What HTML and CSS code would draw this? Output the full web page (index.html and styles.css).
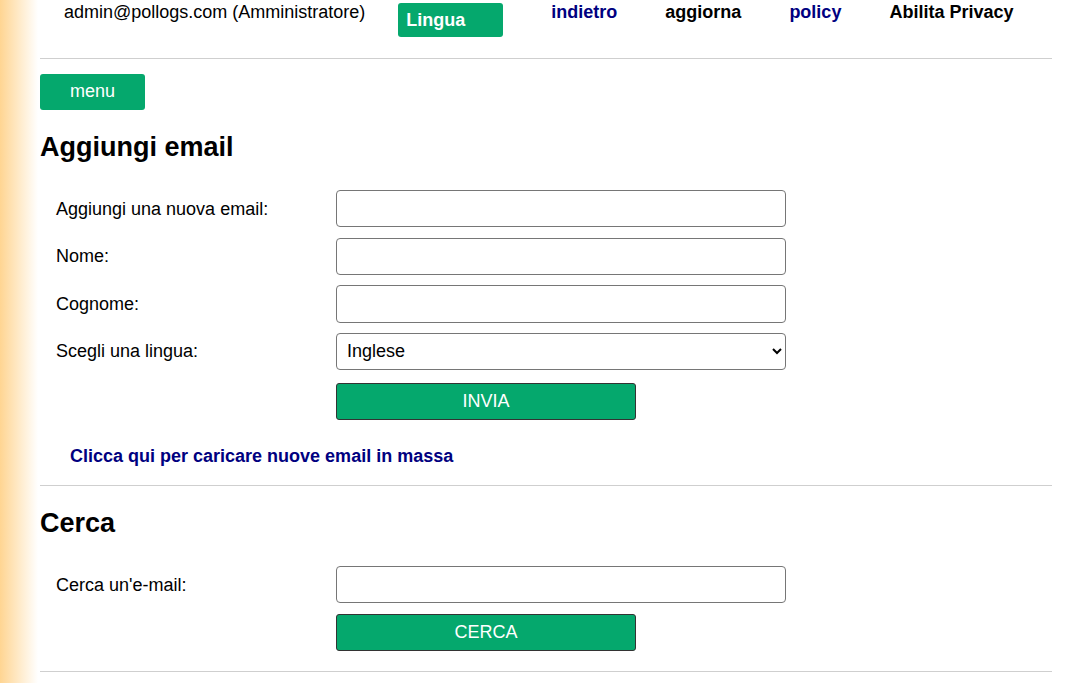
FILE: index.html
```html
<!DOCTYPE html>
<html lang="it">
<head>
<meta charset="utf-8">
<title>Aggiungi email</title>
<link rel="stylesheet" href="styles.css">
</head>
<body>
<div class="page">
  <header class="topbar">
    <span class="user">admin@pollogs.com (Amministratore)</span>
    <button class="lang-btn" type="button">Lingua</button>
    <a class="nav-link navy" href="#">indietro</a>
    <a class="nav-link" href="#">aggiorna</a>
    <a class="nav-link navy" href="#">policy</a>
    <a class="nav-link" href="#">Abilita Privacy</a>
  </header>
  <hr class="rule">
  <button class="menu-btn" type="button">menu</button>

  <h2 class="title title-add">Aggiungi email</h2>
  <form class="form-grid">
    <label class="label" for="em">Aggiungi una nuova email:</label>
    <input class="field" id="em" type="text">
    <label class="label" for="nm">Nome:</label>
    <input class="field" id="nm" type="text">
    <label class="label" for="cg">Cognome:</label>
    <input class="field" id="cg" type="text">
    <label class="label" for="lg">Scegli una lingua:</label>
    <select class="field select" id="lg"><option>Inglese</option></select>
    <span></span>
    <button class="submit" type="button">INVIA</button>
  </form>
  <a class="bulk-link" href="#">Clicca qui per caricare nuove email in massa</a>
  <hr class="rule rule-mid">

  <h2 class="title title-search">Cerca</h2>
  <form class="form-grid search-grid">
    <label class="label" for="se">Cerca un'e-mail:</label>
    <input class="field" id="se" type="text">
    <span></span>
    <button class="submit" type="button">CERCA</button>
  </form>
  <hr class="rule rule-end">
</div>
</body>
</html>
```

FILE: styles.css
```css
html, body {
  margin: 0;
  padding: 0;
}
body {
  background: linear-gradient(to right, #ffd592 0, #fff 38px) #fff;
  font-family: "Liberation Sans", Arial, sans-serif;
  font-size: 18px;
  color: #000;
  min-height: 683px;
}
.page {
  padding: 0 39px 0 40px;
}
.topbar {
  display: flex;
  align-items: flex-start;
  height: 58px;
  padding-left: 24px;
  box-sizing: border-box;
  padding-top: 2px;
  white-space: nowrap;
}
.topbar > * {
  flex-shrink: 0;
}
.user {
  line-height: 21px;
  margin-right: 33px;
}
.lang-btn {
  width: 105px;
  height: 34px;
  margin-top: 1px;
  background: #05a86d;
  color: #fff;
  border: none;
  border-radius: 3px;
  font: bold 18px "Liberation Sans", Arial, sans-serif;
  text-align: left;
  padding: 7px 8px 0;
  display: flex;
  align-items: flex-start;
  margin-right: 48px;
}
.nav-link {
  font-weight: bold;
  color: #000;
  text-decoration: none;
  line-height: 21px;
  margin-right: 48px;
}
.nav-link.navy {
  color: #000080;
}
.rule {
  border: none;
  border-top: 1px solid #cfcfcf;
  margin: 0;
  height: 0;
}
.menu-btn {
  display: block;
  margin-top: 15px;
  width: 105px;
  height: 36px;
  background: #05a86d;
  color: #fff;
  border: none;
  border-radius: 3px;
  font: 18px "Liberation Sans", Arial, sans-serif;
  padding: 0 0 2px;
}
.title {
  font-size: 27px;
  font-weight: bold;
  line-height: 32px;
  margin: 0;
}
.title-add {
  margin-top: 21px;
}
.form-grid {
  display: grid;
  grid-template-columns: 280px 450px;
  column-gap: 0;
  row-gap: 10.2px;
  align-items: center;
  margin: 27px 0 0 16px;
}
.label {
  line-height: 21px;
  padding-top: 1px;
}
.field {
  box-sizing: border-box;
  width: 450px;
  height: 37.4px;
  border: 1px solid #767676;
  border-radius: 4px;
  background: #fff;
  font: 18px "Liberation Sans", Arial, sans-serif;
  padding: 0 10px;
  margin: 0;
}
.select {
  padding: 0 6px 0 6px;
  color: #000;
}
.submit {
  box-sizing: border-box;
  width: 300px;
  height: 37px;
  margin-top: 2.5px;
  background: #05a86d;
  color: #fff;
  border: 1px solid #333;
  border-radius: 3px;
  font: 18px "Liberation Sans", Arial, sans-serif;
  padding: 0;
}
.bulk-link {
  display: block;
  margin: 26px 0 0 30px;
  font-weight: bold;
  color: #000080;
  text-decoration: none;
  line-height: 21px;
}
.rule-mid {
  margin-top: 18px;
}
.title-search {
  margin-top: 21px;
}
.search-grid {
  margin-top: 27px;
  row-gap: 8.5px;
}
.rule-end {
  margin-top: 20px;
}
```
